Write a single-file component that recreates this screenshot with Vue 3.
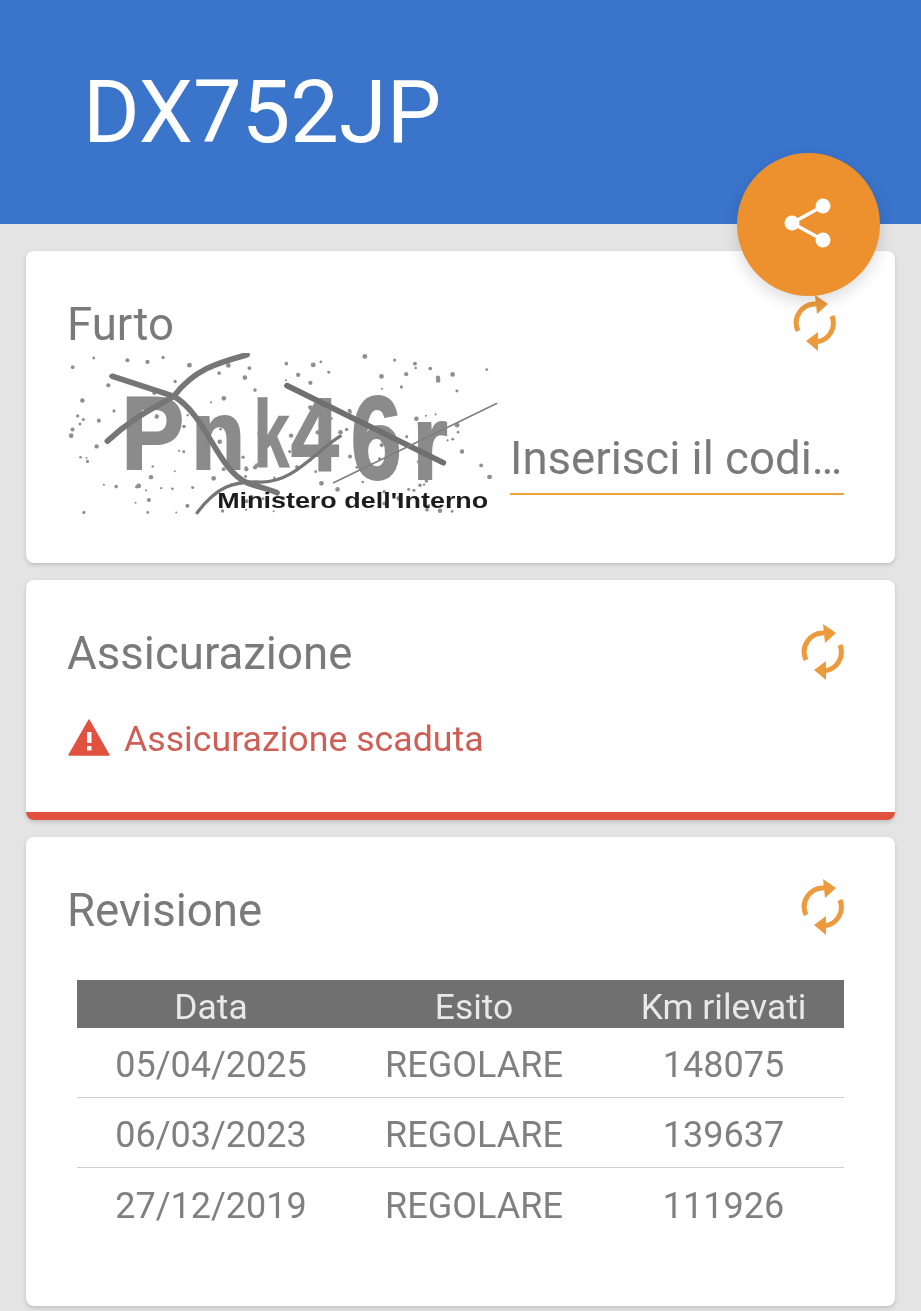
<script setup>
let seed = 4271
const rnd = () => {
  seed = (seed * 1103515 + 12345) % 2147483648
  return seed / 2147483648
}
const dots = Array.from({ length: 170 }, () => ({
  x: 210 + rnd() * 1290,
  y: 230 + rnd() * 470,
  r: 3 + rnd() * 4.5,
}))
const letters = [
  { c: 'P', x: 362, y: 570, sx: 0.98, sy: 1.07, s: 290 },
  { c: 'n', x: 572, y: 570, sx: 1.1, sy: 1.22, s: 240 },
  { c: 'k', x: 760, y: 564, sx: 0.66, sy: 0.98, s: 290 },
  { c: '4', x: 872, y: 576, sx: 0.94, sy: 1.14, s: 275 },
  { c: '6', x: 1052, y: 598, sx: 1.0, sy: 1.3, s: 275 },
  { c: 'r', x: 1238, y: 598, sx: 1.12, sy: 1.32, s: 240 },
]
const rows = [
  ['05/04/2025', 'REGOLARE', '148075'],
  ['06/03/2023', 'REGOLARE', '139637'],
  ['27/12/2019', 'REGOLARE', '111926'],
]
</script>

<template>
  <div class="page">
    <header class="bar">
      <h1 class="plate">DX752JP</h1>
      <button class="fab" aria-label="Condividi">
        <svg class="share" width="54" height="56" viewBox="0 0 54 56">
          <path d="M39 10 8 27l31 17" fill="none" stroke="#fff" stroke-width="3.5" />
          <circle cx="39" cy="10" r="7.5" fill="#fff" />
          <circle cx="8" cy="27" r="7.5" fill="#fff" />
          <circle cx="39" cy="44" r="7.5" fill="#fff" />
        </svg>
      </button>
    </header>

    <main class="cards">
      <section class="card furto">
        <div class="head">
          <h2>Furto</h2>
          <svg class="sync sync-furto" viewBox="11 4 44 60">
            <path d="M16 42A19 19 0 0 1 34 15" />
            <path class="tip" d="M33 6 46 15 35 25Z" />
            <path d="M50 27A19 19 0 0 1 34 53" />
            <path class="tip" d="M36 43 24 52 36 62Z" />
          </svg>
        </div>
        <div class="captcha-row">
          <svg class="captcha" viewBox="200 220 1320 490">
            <circle v-for="(d, i) in dots" :key="i" :cx="d.x" :cy="d.y" :r="d.r" fill="#8f8f8f" />
            <text
              v-for="l in letters"
              :key="l.c"
              class="glyph"
              :font-size="l.s"
              :transform="`translate(${l.x} ${l.y}) scale(${l.sx} ${l.sy})`"
            >{{ l.c }}</text>
            <g fill="none" stroke-linecap="round">
              <path d="M335 290 520 350C620 410 650 570 740 610 780 625 810 630 830 640" stroke="#767676" stroke-width="17" />
              <path d="M320 485C400 410 470 380 520 350 580 270 650 250 740 225" stroke="#767676" stroke-width="17" />
              <path d="M860 318 1330 550" stroke="#707070" stroke-width="17" />
              <path d="M590 700C650 620 700 605 780 608 880 610 940 520 1020 470" stroke="#767676" stroke-width="10" />
              <path d="M1000 610 1490 372" stroke="#808080" stroke-width="5" />
            </g>
            <text class="ministero" x="650" y="685" textLength="815" lengthAdjust="spacingAndGlyphs">Ministero dell'Interno</text>
          </svg>
          <div class="code-field">Inserisci il codi…</div>
        </div>
      </section>

      <section class="card assicurazione">
        <div class="head">
          <h2>Assicurazione</h2>
          <svg class="sync" viewBox="11 4 44 60">
            <path d="M16 42A19 19 0 0 1 34 15" />
            <path class="tip" d="M33 6 46 15 35 25Z" />
            <path d="M50 27A19 19 0 0 1 34 53" />
            <path class="tip" d="M36 43 24 52 36 62Z" />
          </svg>
        </div>
        <div class="alert">
          <svg width="42" height="37" viewBox="0 0 42 37">
            <path d="M21 1 41 36H1Z" fill="#e0523f" stroke="#e0523f" stroke-width="1.5" stroke-linejoin="round" />
            <rect x="19" y="13" width="4.5" height="11" fill="#fff" />
            <rect x="19" y="27" width="4.5" height="4.5" fill="#fff" />
          </svg>
          <span>Assicurazione scaduta</span>
        </div>
      </section>

      <section class="card revisione">
        <div class="head">
          <h2>Revisione</h2>
          <svg class="sync sync-rev" viewBox="11 4 44 60">
            <path d="M16 42A19 19 0 0 1 34 15" />
            <path class="tip" d="M33 6 46 15 35 25Z" />
            <path d="M50 27A19 19 0 0 1 34 53" />
            <path class="tip" d="M36 43 24 52 36 62Z" />
          </svg>
        </div>
        <div class="table">
          <div class="tr th">
            <span>Data</span><span>Esito</span><span>Km rilevati</span>
          </div>
          <div v-for="r in rows" :key="r[0]" class="tr">
            <span v-for="c in r" :key="c">{{ c }}</span>
          </div>
        </div>
      </section>
    </main>
  </div>
</template>

<style>
html, body { margin: 0; background: #e4e4e4; }
</style>

<style scoped>
.page {
  width: 921px;
  height: 1311px;
  overflow: hidden;
  background: #e4e4e4;
  font-family: Roboto, "Liberation Sans", sans-serif;
  color: #7a7a7a;
  filter: blur(0.5px);
}
.bar {
  position: relative;
  height: 224px;
  box-sizing: border-box;
  padding: 61px 0 0 83px;
  background: #3a74cb;
}
.plate {
  margin: 0;
  font-size: 86.5px;
  line-height: 104px;
  font-weight: 400;
  color: #fff;
}
.fab {
  position: absolute;
  left: 737px;
  top: 153px;
  z-index: 2;
  display: flex;
  align-items: center;
  justify-content: center;
  width: 143px;
  height: 143px;
  padding: 0;
  border: 0;
  border-radius: 50%;
  background: #ed912f;
  box-shadow: 0 6px 16px rgba(0, 0, 0, 0.14);
}
.share { margin-left: 5px; margin-top: -2px; }
.cards {
  display: flex;
  flex-direction: column;
  gap: 17px;
  padding: 27px 26px 0;
}
.card {
  box-sizing: border-box;
  border-radius: 8px;
  padding: 0 51px 0 42px;
  background: #fff;
  box-shadow: 0 2px 4px rgba(0, 0, 0, 0.16);
}
.furto { height: 312px; padding-top: 49px; }
.assicurazione {
  height: 240px;
  padding-top: 49px;
  border-bottom: 8px solid #e0523f;
}
.revisione { height: 469px; padding-top: 49px; }
.head {
  display: flex;
  align-items: center;
  justify-content: space-between;
  height: 50px;
}
h2 {
  margin: 0 0 0 -1px;
  font-size: 45.6px;
  line-height: 50px;
  font-weight: 400;
  color: #7a7a7a;
}
.sync {
  flex: none;
  width: 44px;
  height: 60px;
  margin: -4px -1px 0 0;
  fill: none;
  stroke: #ed9a3c;
  stroke-width: 5;
}
.sync .tip { fill: #ed9a3c; stroke: none; }
.sync-furto { margin: -4px 7px 0 0; }
.sync-rev { margin-top: -8px; }
.captcha-row {
  display: flex;
  align-items: flex-end;
  margin-top: 3px;
}
.captcha {
  flex: none;
  width: 440px;
  height: 163px;
  margin-left: -1px;
  margin-right: 3px;
  filter: blur(0.4px);
}
.glyph {
  font-family: "Liberation Sans", sans-serif;
  font-weight: 700;
  fill: #8b8b8b;
  stroke: #8b8b8b;
  stroke-width: 5;
}
.ministero {
  font-family: "Liberation Sans", sans-serif;
  font-size: 68px;
  font-weight: 700;
  fill: #1c1c1c;
}
.code-field {
  flex: 1;
  box-sizing: border-box;
  height: 72px;
  margin-bottom: 21px;
  padding-top: 2px;
  border-bottom: 2px solid #e9a53f;
  font-size: 45.6px;
  line-height: 68px;
  color: #7a7a7a;
  white-space: nowrap;
}
.alert {
  display: flex;
  align-items: center;
  gap: 14px;
  margin-top: 35px;
  font-size: 35.7px;
  line-height: 42px;
  color: #cf5f56;
}
.alert span { padding-top: 4px; }
.table {
  margin: 44px 0 0 9px;
}
.tr {
  display: grid;
  grid-template-columns: 268px 258px 241px;
  height: 70px;
  padding-top: 5px;
  border-bottom: 1px solid #cfcfcf;
  box-sizing: border-box;
  align-items: center;
  text-align: center;
  font-size: 36px;
  color: #808080;
}
.tr:last-child { border-bottom: 0; }
.tr.th {
  height: 48px;
  border-bottom: 0;
  background: #707070;
  color: #e8e8e8;
  font-size: 35.4px;
}
</style>
